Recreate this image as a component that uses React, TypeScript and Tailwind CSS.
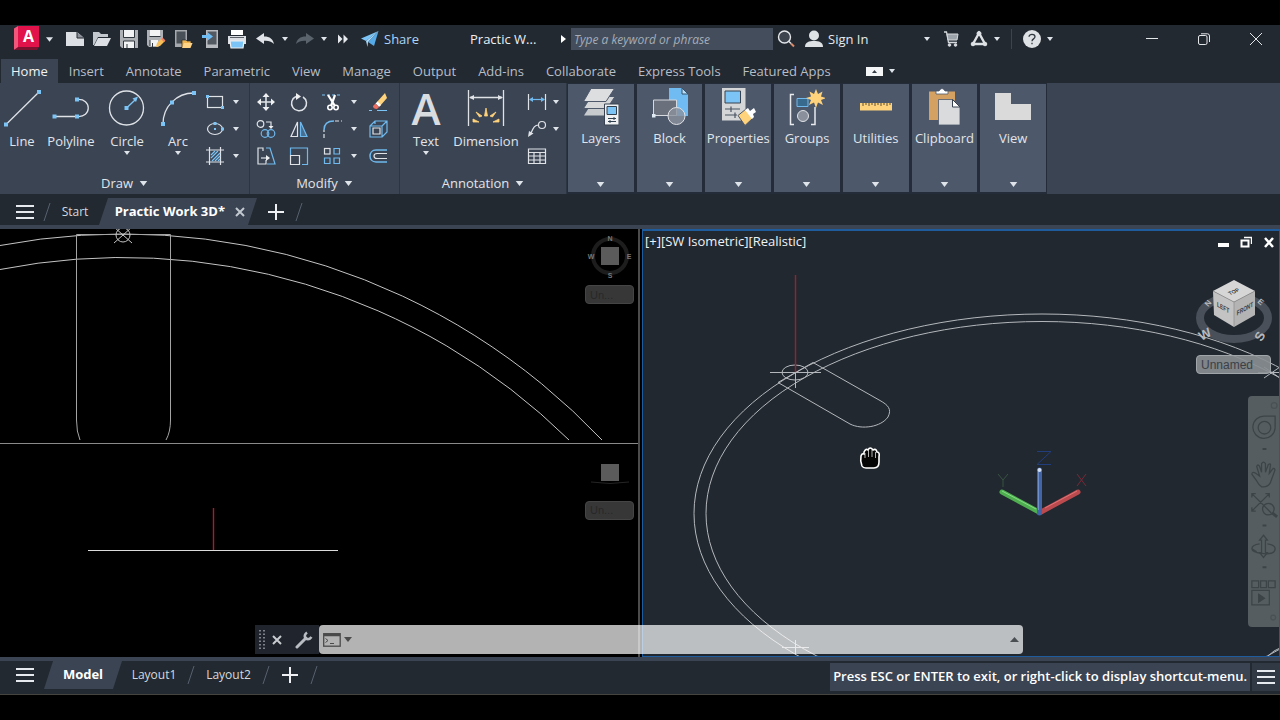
import React from "react";

type ToolProps = { label: string; children: React.ReactNode };

const RIBBON_TABS = [
    "Home", "Insert", "Annotate", "Parametric", "View", "Manage", "Output",
    "Add-ins", "Collaborate", "Express Tools", "Featured Apps",
];

function Caret({ className = "h-1 w-1.5" }: { className?: string }) {
    return (
        <svg viewBox="0 0 6 4" className={`shrink-0 fill-[#dfe4ea] ${className}`}>
            <path d="M0 0H6L3 4Z" />
        </svg>
    );
}

function CaretButton({ label }: { label: string }) {
    return (
        <button aria-label={label} className="flex h-[27px] w-3 items-center justify-center">
            <Caret />
        </button>
    );
}

function QuickButton({ label, children }: ToolProps) {
    return (
        <button aria-label={label} className="flex h-7 w-[27px] shrink-0 items-center justify-center">
            <svg viewBox="0 0 20 20" className="h-5 w-5" fill="none">{children}</svg>
        </button>
    );
}

function SmallTool({ label, children }: ToolProps) {
    return (
        <button aria-label={label} className="flex h-[27px] w-full items-center justify-center">
            <svg viewBox="0 0 20 20" className="h-5 w-5" fill="none" stroke="#dfe3e8" strokeWidth="1.2">
                {children}
            </svg>
        </button>
    );
}

function BigTool({ label, width, caret, children }: ToolProps & { width: string; caret?: boolean }) {
    return (
        <button className={`flex flex-col items-center pt-0.5 ${width}`}>
            <span className="flex h-[38px] w-[38px] items-center justify-center">{children}</span>
            <span className="mt-1 text-[13px] leading-5">{label}</span>
            {caret && <Caret />}
        </button>
    );
}

function BigIcon({ children }: { children: React.ReactNode }) {
    return (
        <svg viewBox="0 0 38 38" className="h-[38px] w-[38px]" fill="none" stroke="#dfe3e8" strokeWidth="1.3">
            {children}
        </svg>
    );
}

function Node({ x, y, s = 4 }: { x: number; y: number; s?: number }) {
    return <rect x={x - s / 2} y={y - s / 2} width={s} height={s} fill="#7cc4f5" stroke="none" />;
}

function Group({ title, width, children }: { title: string; width: string; children: React.ReactNode }) {
    return (
        <section className={`flex shrink-0 flex-col border-r border-[#2c3542] ${width}`}>
            <div className="flex flex-1 pt-1">{children}</div>
            <button className="flex h-[22px] items-center justify-center gap-1.5 text-[13px] leading-5">
                {title}
                <Caret className="h-[5px] w-[9px]" />
            </button>
        </section>
    );
}

function Panel({ title, children }: { title: string; children: React.ReactNode }) {
    return (
        <button className="flex flex-col items-center bg-[#4d586a] pt-1">
            <svg viewBox="0 0 36 38" className="h-[38px] w-9" fill="none">{children}</svg>
            <span className="mt-0.5 text-[13px] leading-5">{title}</span>
            <Caret className="mt-auto mb-[5px] h-[5px] w-[9px]" />
        </button>
    );
}

function Slash() {
    return (
        <svg viewBox="0 0 8 20" className="h-5 w-2 shrink-0" stroke="#56606d" fill="none">
            <path d="M7 1L1 19" />
        </svg>
    );
}

function Burger() {
    return (
        <svg viewBox="0 0 18 16" className="h-4 w-[18px]" fill="#e6e9ed">
            <path d="M0 1h18v2H0zM0 7h18v2H0zM0 13h18v2H0z" />
        </svg>
    );
}

function Plus() {
    return (
        <svg viewBox="0 0 16 16" className="h-4 w-4" stroke="#eef0f3" strokeWidth="2">
            <path d="M8 0V16M0 8H16" />
        </svg>
    );
}

function TitleBar() {
    return (
        <header className="flex h-7 items-center text-[13px]">
            <button aria-label="Application menu" className="ml-3 flex w-[41px] items-center gap-1.5">
                <svg viewBox="0 0 28 26" className="h-[26px] w-7">
                    <path d="M2 2.500L6 0V22L2 24Z" fill="#f0577b" />
                    <path d="M6 0H27V21H6Z" fill="#e2124a" />
                    <path d="M6 21H27L25 24H2Z" fill="#7d1230" />
                    <text x="16.500" y="16" textAnchor="middle" fontSize="16" fontWeight="700" fill="#fff" fontFamily="Open Sans, sans-serif">A</text>
                </svg>
                <Caret className="h-[5px] w-[7px]" />
            </button>
            <div className="ml-2 flex">
                <QuickButton label="New">
                    <path d="M1 3H12L19 9V17H1Z" fill="#dcdfe3" />
                    <path d="M12 3V9H19" fill="#8b9099" stroke="#242b33" />
                </QuickButton>
                <QuickButton label="Open">
                    <path d="M1 3H7L9 5H16V8H6L2 16H1Z" fill="#c3c8ce" />
                    <path d="M6 9H19L15 17H2Z" fill="#dcdfe3" />
                </QuickButton>
                <QuickButton label="Save">
                    <path d="M1 1H19V19H3L1 17Z" fill="#aeb2b7" />
                    <path d="M5 1H15V8H5ZM5 12H15V19H5Z" fill="#f2f3f4" />
                    <path d="M4.500 1V8.500H15.500V1M4.500 19V12H15.500V19M8 15V19" stroke="#30363d" />
                </QuickButton>
                <QuickButton label="Save as">
                    <path d="M1 1H17V13L12 18H3L1 16Z" fill="#aeb2b7" />
                    <path d="M4 1H14V7H4ZM4 11H12V17H4Z" fill="#f2f3f4" />
                    <path d="M3.500 7.500H14.500M4 11V17M6.500 14V18" stroke="#30363d" />
                    <path d="M10 18L11 14L16 9L19 12L14 17Z" fill="#f7bd56" />
                    <path d="M15 10L16.500 8.500L19.500 11.500L18 13Z" fill="#ee7d63" />
                </QuickButton>
                <QuickButton label="Open from mobile">
                    <rect x="2" y="1" width="12" height="17" fill="#a5a9ae" />
                    <rect x="3.500" y="2.500" width="9" height="12" fill="#4a5058" />
                    <path d="M9 11H13L14 12H18V18H9Z" fill="#f1b54f" stroke="#242b33" strokeWidth=".7" />
                    <path d="M11 14H19.500L17.500 19H9Z" fill="#ffd487" />
                </QuickButton>
                <QuickButton label="Save to mobile">
                    <rect x="6" y="1" width="12" height="18" fill="#b7bbc0" />
                    <rect x="7.500" y="2.500" width="9" height="13" fill="#535960" />
                    <path d="M2 6H7V3L13 7.500L7 12V9H2Z" fill="#6fbdf5" />
                </QuickButton>
                <QuickButton label="Plot">
                    <path d="M4 1H16V6H4Z" fill="#fff" />
                    <path d="M1 7H19V15H1Z" fill="#dcdfe3" />
                    <path d="M3 12H17L16 19H4Z" fill="#7cc4f5" stroke="#eef0f2" strokeWidth="1.200" />
                    <path d="M3 8.500H17" stroke="#5b6169" />
                </QuickButton>
                <QuickButton label="Undo">
                    <path d="M2 9.500L10 4V7.500C16 7.500 19 10 20 15C17 12 14 11.500 10 11.800V15Z" fill="#dfe3e7" />
                </QuickButton>
            </div>
            <div className="ml-0.5 flex items-center">
                <CaretButton label="Undo history" />
                <QuickButton label="Redo">
                    <path d="M19 9.500L11 4V7.500C5 7.500 2 10 1 15C4 12 7 11.500 11 11.800V15Z" fill="#5a626c" />
                </QuickButton>
                <CaretButton label="Redo history" />
            </div>
            <button aria-label="More tools" className="ml-px flex w-6 justify-center">
                <svg viewBox="0 0 12 10" className="h-2.5 w-3" fill="#e6e9ed">
                    <path d="M1 0.500L5.500 5L1 9.500ZM6.500 0.500L11 5L6.500 9.500Z" />
                </svg>
            </button>
            <button className="ml-1.5 flex w-[87px] items-center gap-[5px] text-[#a9d6fa]">
                <svg viewBox="0 0 18 16" className="h-4 w-[18px]">
                    <path d="M17.500 0L0 7.500L5 10Z" fill="#7cc4f5" />
                    <path d="M17.500 0L7 11L13 15Z" fill="#56aae8" />
                    <path d="M5 10L17.500 0L7 11L6.500 16Z" fill="#a9dafb" />
                </svg>
                <span className="pt-0.5">Share</span>
            </button>
            <span className="ml-[22px] w-[85px] pt-0.5 text-[#eceff2]">Practic W...</span>
            <button aria-label="Expand search" className="flex w-4 justify-center">
                <svg viewBox="0 0 5 8" className="h-2 w-[5px]" fill="#fff"><path d="M0 0L5 4L0 8Z" /></svg>
            </button>
            <input
                aria-label="Search"
                placeholder="Type a keyword or phrase"
                className="h-[22px] w-[202px] bg-[#434d5c] px-[3px] text-[12px] italic outline-none placeholder:text-[#a5adb8]"
            />
            <button aria-label="Find" className="ml-1 flex w-[18px] justify-center">
                <svg viewBox="0 0 18 18" className="h-[18px] w-[18px]" fill="none">
                    <circle cx="7.500" cy="7" r="6" stroke="#e4e7ea" strokeWidth="1.400" fill="#3d444d" />
                    <path d="M12 11.500L14 13.500" stroke="#e4e7ea" strokeWidth="1.500" />
                    <path d="M14 13.500L17 16.500" stroke="#dd8c6a" strokeWidth="2" />
                </svg>
            </button>
            <button className="ml-2.5 flex w-[84px] items-center gap-[5px] text-[#e6e9ed]">
                <svg viewBox="0 0 18 18" className="h-[18px] w-[18px] shrink-0" fill="#dfe2e5">
                    <circle cx="9" cy="5.500" r="5" />
                    <path d="M0 17C0 12 4 11 9 11S18 12 18 17Z" />
                </svg>
                <span className="pt-0.5">Sign In</span>
            </button>
            <div className="ml-8 flex items-center">
                <CaretButton label="Account menu" />
                <button aria-label="Store" className="ml-1.5 flex w-6 justify-center">
                    <svg viewBox="0 0 16 16" className="h-4 w-4" fill="none" stroke="#d5d9dd">
                        <path d="M1 1H3.500L5.500 11.500H14" strokeWidth="1.300" />
                        <path d="M4 3H15L14 9H5Z" fill="#9da3aa" />
                        <circle cx="6.500" cy="14" r="1.300" fill="#d5d9dd" />
                        <circle cx="12.500" cy="14" r="1.300" fill="#d5d9dd" />
                    </svg>
                </button>
                <button aria-label="Autodesk App Store" className="ml-1 flex w-6 justify-center">
                    <svg viewBox="0 0 18 18" className="h-[18px] w-[18px]" fill="none" stroke="#dfe2e5">
                        <path d="M9 3L3 14H15Z" strokeWidth="2.400" />
                        <circle cx="9" cy="3.500" r="2" fill="#dfe2e5" />
                        <circle cx="3" cy="14" r="1.800" fill="#dfe2e5" />
                        <circle cx="15" cy="14" r="1.800" fill="#dfe2e5" />
                    </svg>
                </button>
                <CaretButton label="App Store menu" />
                <span className="ml-2 h-5 w-px bg-[#3c444e]" />
                <button aria-label="Help" className="ml-2 flex w-6 justify-center">
                    <svg viewBox="0 0 18 18" className="h-[18px] w-[18px]">
                        <circle cx="9" cy="9" r="9" fill="#dfe2e5" />
                        <path d="M6 6.800C6 3.500 12 3.500 12 6.800C12 9 9 8.800 9 11.200M9 12.800V14.300" fill="none" stroke="#30373f" strokeWidth="1.300" />
                    </svg>
                </button>
                <CaretButton label="Help menu" />
            </div>
            <div className="ml-auto flex gap-7 pr-3 text-[#e4e7ea]">
                <button aria-label="Minimize" className="flex h-6 w-6 items-center justify-center">
                    <svg viewBox="0 0 12 12" className="h-3 w-3" stroke="currentColor"><path d="M0 5.500H12" /></svg>
                </button>
                <button aria-label="Restore" className="flex h-6 w-6 items-center justify-center">
                    <svg viewBox="0 0 12 12" className="h-3 w-3" stroke="currentColor" fill="none">
                        <rect x=".5" y="2.500" width="8.500" height="9" rx="1.500" />
                        <path d="M3 .8H9.500Q11.500 .8 11.500 3V9" />
                    </svg>
                </button>
                <button aria-label="Close" className="flex h-6 w-6 items-center justify-center">
                    <svg viewBox="0 0 12 12" className="h-3 w-3" stroke="currentColor"><path d="M0 0L12 12M12 0L0 12" /></svg>
                </button>
            </div>
        </header>
    );
}

function RibbonTabs() {
    return (
        <nav className="mt-1.5 flex h-6 items-center pl-px text-[13px] text-[#b7bec7]">
            {RIBBON_TABS.map((tab) => (
                <button
                    key={tab}
                    className={tab === "Home" ? "h-6 bg-[#3b4453] px-2.5 pt-0.5 text-[#f0f2f4]" : "h-6 px-[11px] pt-0.5"}
                >
                    {tab}
                </button>
            ))}
            <button aria-label="Minimize ribbon" className="ml-6 flex items-center gap-1.5">
                <svg viewBox="0 0 17 9" className="h-[9px] w-[17px]">
                    <rect width="17" height="9" fill="#f4f5f6" />
                    <path d="M6 6L8.500 3L11 6Z" fill="#333b45" />
                </svg>
                <Caret />
            </button>
        </nav>
    );
}

function Ribbon() {
    return (
        <div className="flex h-[111px] bg-[#3b4453] text-[#e1e5ea]">
            <Group title="Draw" width="w-[250px]">
                <BigTool label="Line" width="w-11">
                    <BigIcon><path d="M3 35.500L36 3" /><Node x={3} y={35.5} /><Node x={36} y={3} /></BigIcon>
                </BigTool>
                <BigTool label="Polyline" width="w-[54px]">
                    <BigIcon>
                        <path d="M2.500 27.500H25C40 29 40 9 25 10.500" />
                        <Node x={2.5} y={27.5} /><Node x={25} y={27.5} /><Node x={25} y={10.5} />
                    </BigIcon>
                </BigTool>
                <BigTool label="Circle" width="w-[58px]" caret>
                    <BigIcon>
                        <circle cx="18.500" cy="19" r="17" />
                        <path d="M18.500 19L27 11" stroke="#7cc4f5" />
                        <path d="M30 7.500L24.500 9.500L28 13Z" fill="#7cc4f5" stroke="none" />
                        <Node x={18.5} y={19} />
                    </BigIcon>
                </BigTool>
                <BigTool label="Arc" width="w-11" caret>
                    <BigIcon>
                        <path d="M4 35C4 18 17 4 35 4" />
                        <Node x={4} y={35} /><Node x={13} y={13.5} /><Node x={35} y={4} />
                    </BigIcon>
                </BigTool>
                <div className="grid grid-cols-[30px_10px] content-start pt-px">
                    <SmallTool label="Rectangle"><rect x="2.500" y="4.500" width="15" height="11" /><Node x={2.5} y={4.5} s={3} /><Node x={17.5} y={15.5} s={3} /></SmallTool>
                    <CaretButton label="Rectangle menu" />
                    <SmallTool label="Ellipse">
                        <ellipse cx="10" cy="10" rx="7.500" ry="5.500" />
                        <Node x={10} y={4.5} s={3} /><Node x={10} y={10} s={2} /><Node x={17.5} y={10} s={3} />
                    </SmallTool>
                    <CaretButton label="Ellipse menu" />
                    <SmallTool label="Hatch">
                        <path d="M4.500 1V19M15.500 1V19M1 4H19M1 16H19" />
                        <path d="M6 9L10 5M6 12L13 5M7 15L15 7M10 15L15 10M13 15L15 13" stroke="#7cc4f5" />
                    </SmallTool>
                    <CaretButton label="Hatch menu" />
                </div>
            </Group>

            <Group title="Modify" width="w-[150px]">
                <div className="grid grid-cols-[32px_34px_32px_10px_40px] content-start pt-px">
                    <SmallTool label="Move">
                        <path d="M10 4V16M4 10H16" strokeWidth="1.600" />
                        <path d="M10 1L13.500 5H6.500ZM10 19L13.500 15H6.500ZM1 10L5 6.500V13.500ZM19 10L15 6.500V13.500Z" fill="#eef0f2" stroke="none" />
                    </SmallTool>
                    <SmallTool label="Rotate"><path d="M14 5A7.500 7.500 0 1 1 7 4.500" strokeWidth="1.500" /><path d="M7 1L12 4.500L7 8Z" fill="#eef0f2" stroke="none" /></SmallTool>
                    <SmallTool label="Trim">
                        <path d="M0 3H20" stroke="#7cc4f5" strokeDasharray="3 2" />
                        <path d="M6 3L13 14M13 3L9 14" strokeWidth="2.200" stroke="#fff" />
                        <circle cx="8" cy="15.500" r="2.200" strokeWidth="1.600" stroke="#fff" /><circle cx="14" cy="15.500" r="2.200" strokeWidth="1.600" stroke="#fff" />
                    </SmallTool>
                    <CaretButton label="Trim menu" />
                    <SmallTool label="Erase">
                        <path d="M9 10L17 1L19 6L12 14Z" fill="#ffd27c" stroke="none" />
                        <path d="M7.500 11.500L9.500 9.500L13 13L11 15Z" fill="#fff" stroke="none" />
                        <path d="M5 14L7.500 11.500L11 15L9 17Q5 17 5 14Z" fill="#ee6f60" stroke="none" />
                        <path d="M1 18.500H4M9 18.500H19" stroke="#7cc4f5" />
                    </SmallTool>

                    <SmallTool label="Copy">
                        <circle cx="4.500" cy="5" r="3.300" /><path d="M10 3H15V8" /><path d="M12.500 7H17.500L15 10Z" fill="#eef0f2" stroke="none" />
                        <circle cx="9" cy="14.500" r="3.800" stroke="#6fb9ee" /><circle cx="15" cy="14.500" r="3.800" stroke="#6fb9ee" />
                    </SmallTool>
                    <SmallTool label="Mirror"><path d="M8.500 3V17.500H2Z" /><path d="M11.500 3V17.500H18Z" stroke="#6fb9ee" fill="#456e90" /></SmallTool>
                    <SmallTool label="Fillet">
                        <path d="M2 19V11M13 2H20" strokeDasharray="4 2" /><path d="M2 11Q2 2 12 2" stroke="#6fb9ee" strokeWidth="1.500" />
                    </SmallTool>
                    <CaretButton label="Fillet menu" />
                    <SmallTool label="Explode">
                        <path d="M2 7L7 2H19V13L14 18M14 7L19 2M7 2V5M2 7H14V18H2Z" stroke="#6fb9ee" /><path d="M5 9H12V15H5Z" />
                    </SmallTool>

                    <SmallTool label="Stretch">
                        <path d="M7 5V2H2V18H10V14" /><path d="M10 2H14L19 18H11" stroke="#6fb9ee" />
                        <path d="M5 12H11" /><path d="M10 9L14 12L10 15Z" fill="#eef0f2" stroke="none" />
                    </SmallTool>
                    <SmallTool label="Scale"><path d="M1.500 9V2H18.500V18.500H13" stroke="#6fb9ee" /><path d="M1.500 9.500H10.500V18.500H1.500Z" /></SmallTool>
                    <SmallTool label="Array">
                        <rect x="2.500" y="2.500" width="5.500" height="5.500" />
                        <path d="M12 2.500H17.500V8H12ZM2.500 12H8V17.500H2.500ZM12 12H17.500V17.500H12Z" stroke="#6fb9ee" />
                    </SmallTool>
                    <CaretButton label="Array menu" />
                    <SmallTool label="Offset"><path d="M19 4H8C0 4 0 16 8 16H19" stroke="#6fb9ee" strokeWidth="1.500" /><path d="M19 7.500H9C5 7.500 5 12.500 9 12.500H19" /></SmallTool>
                </div>
            </Group>

            <Group title="Annotation" width="w-[167px]">
                <BigTool label="Text" width="ml-1 w-11" caret>
                    <span className="text-[44px] leading-[38px] font-semibold text-[#d9dce0]">A</span>
                </BigTool>
                <BigTool label="Dimension" width="w-[76px]">
                    <BigIcon>
                        <path d="M1.500 1V37M36.500 1V37M3 8.500H35" />
                        <path d="M2 8.500L7 6V11ZM36 8.500L31 6V11Z" fill="#dfe3e8" stroke="none" />
                        <path d="M17.500 27L19 19L20.500 27ZM12.500 28L9 23L15 27ZM25.500 28L29 23L23 27ZM12 33H6V30ZM26 33H32V30Z" fill="#ffd27c" stroke="#ffd27c" strokeWidth=".8" />
                    </BigIcon>
                </BigTool>
                <div className="grid grid-cols-[26px_12px] content-start pt-px">
                    <SmallTool label="Linear dimension">
                        <path d="M1.500 2V18M18.500 2V18" /><path d="M3 7.500H17" stroke="#6fb9ee" /><path d="M2 7.500L6 5V10ZM18 7.500L14 5V10Z" fill="#6fb9ee" stroke="none" />
                    </SmallTool>
                    <CaretButton label="Linear dimension menu" />
                    <SmallTool label="Leader"><circle cx="15" cy="6" r="3.500" /><path d="M11.500 6C7 6 6 10 3 16" /><path d="M1 18L2 12L6.500 14.500Z" fill="#dfe3e8" stroke="none" /></SmallTool>
                    <CaretButton label="Leader menu" />
                    <SmallTool label="Table"><path d="M1.500 3H18.500V17.500H1.500ZM1.500 6.500H18.500M1.500 10H18.500M1.500 14H18.500M7 6.500V17.500M13 6.500V17.500" /></SmallTool>
                </div>
            </Group>

            <div className="grid w-[480px] grid-cols-7 gap-[3px] border border-[#242c39] bg-[#242c39] pb-px">
                <Panel title="Layers">
                    <path d="M8 16.500L1 27.500H24L31 16.500Z" fill="#c8cbce" />
                    <path d="M8 8.500L.5 20.500H24L32 8.500Z" fill="#d5d7d9" stroke="#4d586a" />
                    <path d="M8 .5L.5 13.500H23L31.500 .5Z" fill="#dddedf" stroke="#4d586a" />
                    <path d="M21.500 16H36V37H21.500Z" fill="#eef0f1" stroke="#394250" />
                    <path d="M24 18.500H33.500V26.500H24Z" fill="#7cc4f5" stroke="#30404f" />
                    <path d="M25 30.500H33M25 33.500H33M31 29V32M27 32V35" stroke="#30404f" />
                </Panel>
                <Panel title="Block">
                    <path d="M17 0H30L36 6V28H17Z" fill="#6fbbf2" />
                    <path d="M30 0V6H36Z" fill="#b6def9" stroke="#35536c" />
                    <path d="M1.500 12H24.500V27.500H1.500Z" fill="#6a717c" stroke="#d6d9dd" />
                    <rect x="0" y="26" width="3.500" height="3.500" fill="#dfeaf5" />
                    <circle cx="24.500" cy="28" r="8.500" fill="#8b929d" fillOpacity=".8" stroke="#e0e2e5" />
                </Panel>
                <Panel title="Properties">
                    <path d="M2 0H25.500V32.500H2Z" fill="#d5d6d8" />
                    <path d="M5 3H20.500V15H5Z" fill="#7cc4f5" stroke="#36424f" />
                    <path d="M5 21H20M5 27H17M11 18.500V24M15 24.500V30" stroke="#4b5461" strokeWidth="1.200" />
                    <path d="M18 27.500L26 21L33 30L25 37.500Z" fill="#ffd27c" stroke="#4d586a" />
                    <path d="M25 22L28 20L30 23L34 20L36 24L33 26L34 29L32 31Z" fill="#fff" />
                </Panel>
                <Panel title="Groups">
                    <path d="M5 6.500H1.500V36.500H5M22 36.500H26V19" stroke="#e8eaed" strokeWidth="1.500" />
                    <path d="M8 10.500H19V18.500H8Z" fill="#376a8d" stroke="#6fb9ee" />
                    <circle cx="14" cy="28" r="5.500" fill="#8a919c" stroke="#dfe2e5" />
                    <path d="M27 1L29 6L33.500 3.500L32 8.500L37 10L32 12L34 17L29 14.500L27 20L25 14.500L20 17L22 12L17 10L22 8.500L20.500 3.500L25 6Z" fill="#ffd27c" />
                </Panel>
                <Panel title="Utilities">
                    <path d="M2 15H34V22.500H2Z" fill="#ffd27c" />
                    <path d="M5 15V18M8 15V17M11 15V18M14 15V17M17 15V18M20 15V17M23 15V18M26 15V17M29 15V18M32 15V17" stroke="#5b4f38" />
                </Panel>
                <Panel title="Clipboard">
                    <path d="M3 3.500H29V32H3Z" fill="#d5a162" />
                    <path d="M10 3H13Q16 -2 19 3H22V6H10Z" fill="#fff" stroke="#4d586a" strokeWidth=".8" />
                    <path d="M12.500 11.500H27L34 18.500V37H12.500Z" fill="#d9dbdd" stroke="#4d586a" strokeWidth=".8" />
                    <path d="M26.500 11.500V19H34Z" fill="#fff" stroke="#39424f" />
                </Panel>
                <Panel title="View">
                    <path d="M0 5H16V16H36V32H0Z" fill="#dadada" />
                </Panel>
            </div>
        </div>
    );
}

function FileTabs() {
    return (
        <div className="flex h-[35px] items-end border-b-4 border-[#3b4453] text-[13px] text-[#d5dade]">
            <button aria-label="File tab menu" className="ml-4 flex h-[27px] items-center"><Burger /></button>
            <div className="ml-[9px] flex h-[27px] items-center"><Slash /></div>
            <button className="h-[27px] w-12 text-[12px]">Start</button>
            <div className="flex h-[27px] w-[158px] items-center justify-end gap-2.5 bg-[#3b4453] pr-3 [clip-path:polygon(9px_0,100%_0,calc(100%_-_9px)_100%,0_100%)]">
                <button className="font-bold text-white">Practic Work 3D*</button>
                <button aria-label="Close tab">
                    <svg viewBox="0 0 10 10" className="h-2.5 w-2.5" stroke="#c3c9d0" strokeWidth="2"><path d="M1 1L9 9M9 1L1 9" /></svg>
                </button>
            </div>
            <button aria-label="New tab" className="ml-[11px] flex h-[27px] items-center"><Plus /></button>
            <div className="ml-[11px] flex h-[27px] items-center"><Slash /></div>
        </div>
    );
}

function ViewLabel() {
    return (
        <button className="h-[19px] w-[49px] rounded-sm border border-[#454545] bg-[#373737] pl-1 text-left font-['Liberation_Sans'] text-[11px] leading-4 text-[#282828]">
            Un...
        </button>
    );
}

function TopView() {
    return (
        <div className="relative min-h-0 flex-1 overflow-hidden border-b border-[#8a8a8a]">
            <svg className="absolute inset-0 h-full w-full" fill="none" stroke="#c4c4c4">
                <g transform="translate(0 -229)">
                    <path d="M0 245.500A660 660 0 0 1 602 440" />
                    <path d="M0 269.500A636 636 0 0 1 569 440" />
                    <path d="M80 440Q76.500 432 76.500 420V234.500H170.500V420Q170.500 432 166 440" stroke="#a4a4a4" />
                    <circle cx="123" cy="235" r="7" />
                    <path d="M114 227L132 243M132 227L114 243" />
                </g>
            </svg>
            <div className="absolute top-1 right-1 flex w-[49px] flex-col items-center">
                <svg viewBox="0 0 48 48" className="h-12 w-12">
                    <circle cx="24" cy="23" r="17" fill="none" stroke="#1d1d1d" strokeWidth="4" />
                    <rect x="15" y="14" width="18" height="18" fill="#5b5b5b" />
                    <g fill="#777" fontSize="7" fontWeight="700" fontFamily="Liberation Sans, sans-serif" textAnchor="middle">
                        <text x="24" y="8">N</text>
                        <text x="24" y="45">S</text>
                        <text x="5" y="26">W</text>
                        <text x="43" y="26">E</text>
                    </g>
                </svg>
                <div className="mt-1 flex"><ViewLabel /></div>
            </div>
        </div>
    );
}

function FrontView() {
    return (
        <div className="relative min-h-0 flex-1 overflow-hidden">
            <svg className="absolute inset-0 h-full w-full" fill="none">
                <g transform="translate(0 -444)">
                    <path d="M88 550.500H338" stroke="#dcdcdc" />
                    <path d="M213.500 508V550" stroke="#a81c2c" strokeWidth="1.400" />
                </g>
            </svg>
            <div className="absolute top-5 right-1 flex w-[49px] flex-col items-center">
                <svg viewBox="0 0 48 20" className="h-5 w-12">
                    <rect x="15" y="0" width="18" height="17" fill="#5b5b5b" />
                    <path d="M5 18Q24 21 43 18" fill="none" stroke="#252525" />
                </svg>
                <div className="mt-[17px] flex"><ViewLabel /></div>
            </div>
        </div>
    );
}

function ViewCube() {
    return (
        <svg viewBox="0 0 80 72" className="h-[72px] w-20">
            <ellipse cx="40" cy="43" rx="34" ry="21" fill="none" stroke="#4a5059" strokeWidth="8" />
            <path d="M40 5L61 16L40 27L19 16Z" fill="#d6d6d6" />
            <path d="M19 16L40 27V52L20 40Z" fill="#c3c3c3" />
            <path d="M61 16L40 27V52L61 40Z" fill="#b4b4b4" />
            <path d="M19 16L40 27L61 16M40 27V52" fill="none" stroke="#8b8b8b" strokeWidth=".7" />
            <g fill="#3c3c3c" fontSize="7" fontWeight="700" fontFamily="Liberation Sans, sans-serif" textAnchor="middle">
                <text transform="matrix(.7 -.3 .5 .6 41 18)">TOP</text>
                <text transform="matrix(.7 .4 0 1 29 35)">LEFT</text>
                <text transform="matrix(.68 -.4 0 1 51 36)">FRONT</text>
            </g>
            <g fill="#b6b9bd" fontWeight="700" fontFamily="Liberation Sans, sans-serif" textAnchor="middle">
                <text transform="translate(13 63) rotate(-28)" fontSize="13">W</text>
                <text transform="translate(67 62) rotate(-60)" fontSize="13" y="3">S</text>
                <text transform="translate(16 30) rotate(-50)" fontSize="8">N</text>
                <text transform="translate(65 29) rotate(40)" fontSize="8">E</text>
            </g>
        </svg>
    );
}

function NavBar() {
    return (
        <div className="absolute top-[165px] right-0 h-[231px] w-[31px] rounded-l-sm bg-[#555d60]">
            <svg viewBox="0 0 32 231" className="h-full w-full" fill="none" stroke="#3d4447" strokeWidth="1.300">
                <circle cx="27" cy="6" r="3" stroke="#4a5154" />
                <path d="M17 17H28V29A11.500 11.500 0 1 1 17 17Z" />
                <circle cx="17" cy="29" r="6.500" />
                <path d="M15 51H19M15 130H19M15 173H19" strokeWidth="2" />
                <path d="M9 84L4 77Q4 74 8 76L12 79L9 69Q10 66 12 69L14 75V66Q16 63 18 66V75L21 67Q24 65 23 69L22 76L26 71Q29 71 27 75L23 86Q20 91 14 90Q11 88 9 84Z" />
                <path d="M4 97L24 117M22 97L4 115M4 101V97H8M18 97H22V101M4 111V115H8" />
                <circle cx="21" cy="113" r="6" /><path d="M25 117L30 121" strokeWidth="3" />
                <path d="M16 140L20 145H18V158H20L16 163L12 158H14V145H12Z" />
                <path d="M12 149Q4 150 4 154T16 159T28 154Q28 150 20 149M4 154L9 157" />
                <path d="M4 187H11V194H4ZM13 187H19V194H13ZM21 187H28V194H21ZM4 197H22V212H4Z" />
                <path d="M11 201L17 205L11 209Z" fill="#3d4447" />
                <circle cx="26" cy="225" r="2.500" stroke="#4a5154" />
            </svg>
        </div>
    );
}

function IsoView() {
    return (
        <div className="relative ml-0.5 min-w-0 flex-1 overflow-hidden border border-t-2 border-[#1f5c9e] bg-[#212830]">
            <svg className="absolute inset-0 h-full w-full" fill="none" stroke="#b4b8bc">
                <g transform="translate(-643 -231)">
                    <ellipse cx="1042" cy="513.500" rx="348" ry="199.500" />
                    <ellipse cx="1042" cy="513.500" rx="336" ry="192" />
                    <path d="M778 382.500L850 424C862 430 881 427 888 417C892 409 888 405 880 400.500L813 362.500Z" />
                    <ellipse cx="795" cy="372.500" rx="13" ry="7.500" />
                    <path d="M770 372.500H821M795.500 372V388" />
                    <path d="M795.500 275V372" stroke="#9c1f30" strokeWidth="1.400" />
                    <path d="M782 647.500H809M795.500 640V655" />
                    <path d="M1258 372.500H1280M1264 378L1280 367M1264 367L1280 378M1268 656Q1274 650 1280 648" />

                    {/* Pan cursor */}
                    <path d="M862 466Q860 461 861 456Q862 453 864 454V452Q866 448 868 450Q870 446 873 450Q876 448 877 452Q880 452 879 457V462Q879 468 874 468H866Q863 468 862 466Z" fill="#050505" stroke="#fff" strokeWidth="1.600" />
                    <path d="M865 453V458M868.500 450V457M872 450V457M875.500 452V458" stroke="#ddd" strokeWidth=".8" />

                    {/* UCS icon */}
                    <g strokeWidth="5" strokeLinecap="round">
                        <path d="M1039 512L1002 492" stroke="#4fae50" />
                        <path d="M1041 512L1078 492" stroke="#bb4a4f" />
                        <path d="M1039.500 513V470" stroke="#4265a8" />
                    </g>
                    <path d="M1002 491L1036 509" stroke="#86dc83" />
                    <path d="M1045 508L1077 491" stroke="#dd7476" />
                    <path d="M1038.500 471V510" stroke="#6f8fcb" />
                    <circle cx="1039.500" cy="470" r="2" fill="#cfdcf4" stroke="none" />
                    <path d="M1037 451.500H1051L1037 464.500H1051" stroke="#213d7c" />
                    <path d="M998 474L1003 480L1008 474M1003 480V487" stroke="#395341" />
                    <path d="M1077 474L1086 486M1086 474L1077 486" stroke="#7a2838" />
                </g>
            </svg>
            <p className="absolute top-0 left-0.5 text-[13px] leading-5 text-[#f0f2f4]">[+][SW Isometric][Realistic]</p>
            <div className="absolute top-1 right-1 flex gap-[11px]">
                <button aria-label="Minimize viewport" className="w-3">
                    <svg viewBox="0 0 12 14" className="h-3.5 w-3"><path d="M1 8H12V12H1Z" fill="#fff" /></svg>
                </button>
                <button aria-label="Restore viewport" className="w-3">
                    <svg viewBox="0 0 12 14" className="h-3.5 w-3" fill="none" stroke="#fff">
                        <path d="M1.500 5.500H8.500V11.500H1.500Z" strokeWidth="2" /><path d="M4 2.500H11.500V9" strokeWidth="1.400" />
                    </svg>
                </button>
                <button aria-label="Close viewport" className="w-3">
                    <svg viewBox="0 0 12 14" className="h-3.5 w-3" stroke="#fff" strokeWidth="2.500"><path d="M2 3L10 12M10 3L2 12" /></svg>
                </button>
            </div>
            <div className="absolute top-11 right-[5px]"><ViewCube /></div>
            <button className="absolute top-[124px] right-2 h-[19px] w-[75px] rounded border border-[#a0a5aa] bg-[#8a8f94]/90 pl-1 text-left font-['Liberation_Sans'] text-[12px] leading-4 text-[#3b4047]">
                Unnamed
            </button>
            <NavBar />
        </div>
    );
}

function CommandLine() {
    return (
        <div className="absolute bottom-[3px] left-[255px] flex h-[29px] w-3/5 items-center rounded-sm bg-[#20242d]/0">
            <div className="flex h-full items-center bg-[#20242d]">
                <svg viewBox="0 0 6 20" className="ml-1 h-5 w-1.5" stroke="#9ba1a9" strokeWidth="1.500" strokeDasharray="1.500 2">
                    <path d="M1 0V20M5 0V20" />
                </svg>
                <button aria-label="Close command line" className="ml-1.5 flex w-3 justify-center">
                    <svg viewBox="0 0 10 10" className="h-2.5 w-2.5" stroke="#c8ccd1" strokeWidth="2"><path d="M1 1L9 9M9 1L1 9" /></svg>
                </button>
                <button aria-label="Customize" className="mr-1.5 ml-3 flex w-[18px] justify-center">
                    <svg viewBox="0 0 18 18" className="h-[18px] w-[18px]" fill="none" stroke="#b9bdc3">
                        <path d="M2 16L11 7" strokeWidth="3" strokeLinecap="round" />
                        <path d="M12 1.500Q8.500 4 10.500 7.500Q14 9.500 16.500 6" strokeWidth="2.500" />
                    </svg>
                </button>
            </div>
            <div className="flex h-full min-w-0 flex-1 items-center rounded-sm bg-white/70 px-1">
                <button aria-label="Recent commands" className="flex items-center gap-[3px]">
                    <svg viewBox="0 0 18 14" className="h-3.5 w-[18px]" fill="none" stroke="#4a4a4a">
                        <rect x=".7" y=".7" width="16.500" height="12.500" strokeWidth="1.300" />
                        <path d="M1 2H17" strokeWidth="2.500" />
                        <path d="M2.500 5.500L5 7.500L2.500 9.500M7 10.500H11" />
                    </svg>
                    <svg viewBox="0 0 8 5" className="h-[5px] w-2" fill="#4a4a4a"><path d="M0 0H8L4 5Z" /></svg>
                </button>
                <input aria-label="Command" className="h-full min-w-0 flex-1 bg-transparent px-2 text-[13px] text-black outline-none" />
                <button aria-label="Command history">
                    <svg viewBox="0 0 9 5" className="h-[5px] w-[9px]" fill="#4a4f54"><path d="M0 5H9L4.500 0Z" /></svg>
                </button>
            </div>
        </div>
    );
}

function StatusBar() {
    return (
        <footer className="flex h-[38px] items-start border-t-4 border-b border-t-[#3b4453] border-b-[#45443f] text-[12px] text-[#d5dade]">
            <button aria-label="Layout menu" className="ml-4 flex h-7 items-center"><Burger /></button>
            <button className="ml-2.5 h-7 w-[78px] bg-[#3b4453] text-[13px] font-bold text-white [clip-path:polygon(9px_0,100%_0,calc(100%_-_9px)_100%,0_100%)]">
                Model
            </button>
            <button className="h-7 w-16">Layout1</button>
            <div className="ml-px flex h-7 items-center"><Slash /></div>
            <button className="h-7 w-[67px]">Layout2</button>
            <div className="flex h-7 items-center"><Slash /></div>
            <button aria-label="New layout" className="ml-3 flex h-7 items-center"><Plus /></button>
            <div className="ml-3 flex h-7 items-center"><Slash /></div>
            <p className="mt-0.5 ml-auto flex h-7 items-center bg-[#3b4453] px-[3px] text-[13px] font-semibold text-white">
                Press ESC or ENTER to exit, or right-click to display shortcut-menu.
            </p>
            <button aria-label="Customization" className="mt-0.5 ml-0.5 flex h-7 w-7 items-center justify-center bg-[#303944]"><Burger /></button>
        </footer>
    );
}

export default function App() {
    return (
        <div className="h-screen bg-black py-[25px] font-['Open_Sans',sans-serif]">
            <div className="flex h-full flex-col bg-[#222931]">
                <TitleBar />
                <RibbonTabs />
                <Ribbon />
                <FileTabs />
                <main className="relative flex min-h-0 flex-1 bg-black">
                    <div className="flex w-1/2 flex-col border-r-2 border-[#4c4c4c]">
                        <TopView />
                        <FrontView />
                    </div>
                    <IsoView />
                    <CommandLine />
                </main>
                <StatusBar />
            </div>
        </div>
    );
}
